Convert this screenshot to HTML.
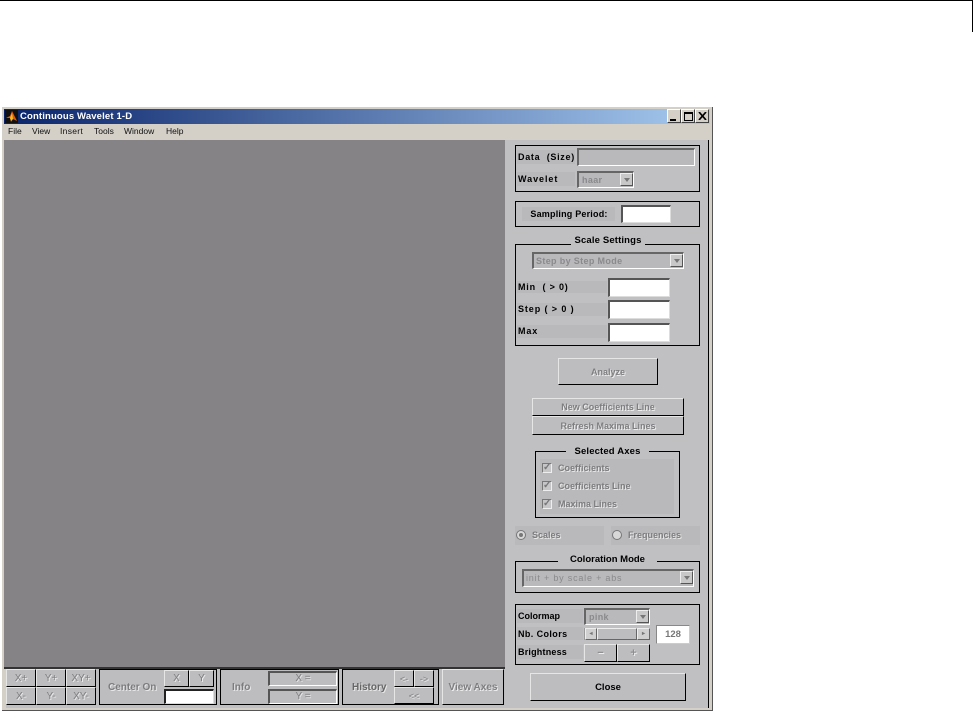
<!DOCTYPE html>
<html><head><meta charset="utf-8"><style>
html,body{margin:0;padding:0;background:#fff}
#r{position:relative;width:973px;height:711px;overflow:hidden;background:#fff;font:bold 9px "Liberation Sans",sans-serif;color:#000}
#r div{position:absolute;box-sizing:border-box;white-space:nowrap}
.b{border:1px solid #000}
.l{background:#b9b8bb;line-height:14px;padding-left:1px}
.t{background:#c0bfc2;text-align:center;line-height:14px;font-size:9.5px}
.d{color:#7c7c7f;text-shadow:1px 1px 0 #e8e8e8;text-align:center}
.btn{background:#bdbcbf;border:1px solid;border-color:#e6e6e6 #000 #000 #e6e6e6;display:flex;align-items:center;justify-content:center;color:#7e7e81;text-shadow:1px 1px 0 #eee}
.in{background:#fff;border:1px solid;border-color:#555 #ddd #ddd #555;border-width:2px 1px 1px 2px}
.sel{background:#b9b8bb;border:1px solid;border-color:#666 #fff #fff #666;border-width:2px 1px 1px 2px;color:#8a8a8d;font-weight:bold;line-height:14px;padding-left:3px;letter-spacing:.35px}
.ar{background:#c8c8c8;border:1px solid;border-color:#eee #555 #555 #eee;right:0;top:0;width:13px;height:13px}
.ar:after{content:"";position:absolute;left:3px;top:4px;border:3px solid transparent;border-top:4px solid #777;border-bottom:0}
.c{background:#c6c6c8;border:1px solid;border-color:#777 #eee #eee #777;width:10px;height:10px;color:#777;font-size:10px;line-height:8px;text-align:center}
.wb{background:#d4d0c8;border:1px solid;border-color:#fff #404040 #404040 #fff;width:14px;height:14px;top:109px}
</style></head><body><div id="r">
<div style="left:0;top:0;width:973px;height:1px;background:#000"></div>
<div style="left:972px;top:0;width:1px;height:32px;background:#000"></div>

<div style="left:2px;top:107px;width:711px;height:604px;background:#d4d0c8;border-right:1px solid #555;border-bottom:1px solid #555"></div>
<div style="left:4px;top:109px;width:706px;height:15px;background:linear-gradient(90deg,#0a246a,#a6caf0)"></div>
<div style="left:5px;top:110px;width:13px;height:13px;background:#111"></div>
<svg style="position:absolute;left:5px;top:110px" width="13" height="13"><path d="M1 8 5 6 7 1 9 5 12 11 8 9 6 12 5 8Z" fill="#e05a10"/><path d="M7 3 8 9 6 11 5 8Z" fill="#f6c020"/></svg>
<div style="left:20px;top:109px;height:15px;line-height:15px;color:#fff;font-size:9.5px;letter-spacing:.15px">Continuous Wavelet 1-D</div>
<div class="wb" style="left:667px"><div style="left:2px;top:9px;width:6px;height:2px;background:#000"></div></div>
<div class="wb" style="left:681px"><div style="left:2px;top:2px;width:9px;height:9px;border:1px solid #000;border-top-width:2px"></div></div>
<div class="wb" style="left:695px"><svg style="position:absolute;left:2px;top:2px" width="9" height="8"><path d="M1 0 8 8M8 0 1 8" stroke="#000" stroke-width="1.7"/></svg></div>
<div style="left:8px;top:124px;height:15px;line-height:15px;font-weight:normal;font-size:8.5px;color:#111">File</div>
<div style="left:32px;top:124px;height:15px;line-height:15px;font-weight:normal;font-size:8.5px;color:#111">View</div>
<div style="left:60px;top:124px;height:15px;line-height:15px;font-weight:normal;font-size:8.5px;color:#111;letter-spacing:.3px">Insert</div>
<div style="left:94px;top:124px;height:15px;line-height:15px;font-weight:normal;font-size:8.5px;color:#111">Tools</div>
<div style="left:124px;top:124px;height:15px;line-height:15px;font-weight:normal;font-size:8.5px;color:#111">Window</div>
<div style="left:166px;top:124px;height:15px;line-height:15px;font-weight:normal;font-size:8.5px;color:#111">Help</div>

<div style="left:6px;top:140px;width:703px;height:568px;background:#c0bfc2;border-right:1px solid #000"></div>
<div style="left:4px;top:140px;width:501px;height:527px;background:#868386"></div>
<div style="left:4px;top:667px;width:501px;height:2px;background:#333"></div>

<!-- Data -->
<div class="b" style="left:515px;top:145px;width:185px;height:47px"></div>
<div class="l" style="left:517px;top:150px;width:58px;height:14px;letter-spacing:.7px;line-height:15px">Data &nbsp;(Size)</div>
<div style="left:577px;top:148px;width:118px;height:18px;background:#b9b8bb;border:1px solid;border-color:#666 #fff #fff #666;border-width:2px 1px 1px 2px"></div>
<div class="l" style="left:517px;top:172px;width:58px;height:14px;letter-spacing:.95px;line-height:15px">Wavelet</div>
<div class="sel" style="left:577px;top:171px;width:57px;height:17px">haar<div class="ar"></div></div>

<div class="b" style="left:515px;top:201px;width:185px;height:26px"></div>
<div class="l" style="left:522px;top:207px;width:93px;height:14px;text-align:center;letter-spacing:.2px">Sampling Period:</div>
<div class="in" style="left:621px;top:205px;width:50px;height:18px"></div>

<!-- Scale -->
<div class="b" style="left:515px;top:244px;width:185px;height:102px"></div>
<div class="t" style="left:571px;top:234px;width:74px;height:14px;letter-spacing:.15px">Scale Settings</div>
<div class="sel" style="left:532px;top:252px;width:152px;height:17px;padding-left:2px">Step by Step Mode<div class="ar"></div></div>
<div class="l" style="left:517px;top:281px;width:90px;height:12px;line-height:12px;letter-spacing:.8px">Min &nbsp;( &gt; 0)</div>
<div class="l" style="left:517px;top:303px;width:90px;height:13px;line-height:13px;letter-spacing:.9px">Step ( &gt; 0 )</div>
<div class="l" style="left:517px;top:325px;width:90px;height:13px;line-height:13px;letter-spacing:.9px">Max</div>
<div class="in" style="left:608px;top:278px;width:62px;height:19px"></div>
<div class="in" style="left:608px;top:300px;width:62px;height:19px"></div>
<div class="in" style="left:608px;top:323px;width:62px;height:19px"></div>

<div class="btn" style="left:558px;top:358px;width:100px;height:27px">Analyze</div>
<div class="btn" style="left:532px;top:398px;width:152px;height:18px">New Coefficients Line</div>
<div class="btn" style="left:532px;top:416px;width:152px;height:19px">Refresh Maxima Lines</div>

<!-- Selected Axes -->
<div class="b" style="left:535px;top:451px;width:145px;height:67px"></div>
<div class="t" style="left:566px;top:445px;width:83px;height:14px;letter-spacing:.15px">Selected Axes</div>
<div style="left:540px;top:459px;width:134px;height:55px;background:#b9b8bb"></div>
<div class="c" style="left:542px;top:463px">&#10003;</div>
<div class="c" style="left:542px;top:481px">&#10003;</div>
<div class="c" style="left:542px;top:499px">&#10003;</div>
<div class="d" style="left:558px;top:462px;line-height:13px">Coefficients</div>
<div class="d" style="left:558px;top:480px;line-height:13px">Coefficients Line</div>
<div class="d" style="left:558px;top:498px;line-height:13px">Maxima Lines</div>

<div style="left:515px;top:526px;width:89px;height:19px;background:#b9b8bb"></div>
<div style="left:611px;top:526px;width:89px;height:19px;background:#b9b8bb"></div>
<div style="left:516px;top:530px;width:10px;height:10px;border-radius:50%;background:#d8d8d8;border:1px solid #777"></div>
<div style="left:519px;top:533px;width:4px;height:4px;border-radius:50%;background:#777"></div>
<div style="left:612px;top:530px;width:10px;height:10px;border-radius:50%;background:#d8d8d8;border:1px solid #777"></div>
<div class="d" style="left:532px;top:529px;line-height:13px">Scales</div>
<div class="d" style="left:628px;top:529px;line-height:13px">Frequencies</div>

<!-- Coloration -->
<div class="b" style="left:515px;top:561px;width:185px;height:32px"></div>
<div class="t" style="left:558px;top:553px;width:99px;height:15px">Coloration Mode</div>
<div class="sel" style="left:522px;top:569px;width:172px;height:18px;padding-left:2px;letter-spacing:.8px;font-weight:normal">init + by scale + abs<div class="ar"></div></div>

<!-- Colormap -->
<div class="b" style="left:515px;top:604px;width:185px;height:61px"></div>
<div class="l" style="left:517px;top:609px;width:66px;height:14px;line-height:15px">Colormap</div>
<div class="l" style="left:517px;top:627px;width:66px;height:13px;line-height:14px;letter-spacing:.4px">Nb. Colors</div>
<div class="l" style="left:517px;top:645px;width:66px;height:14px;line-height:15px;letter-spacing:.2px">Brightness</div>
<div class="sel" style="left:584px;top:608px;width:66px;height:17px">pink<div class="ar"></div></div>
<div style="left:584px;top:628px;width:66px;height:12px;background:#c4c4c6;border:1px solid #999"></div>
<div style="left:585px;top:628px;width:12px;height:12px;background:#d0d0d0;border:1px solid;border-color:#eee #666 #666 #eee;font-size:6px;line-height:10px;text-align:center;color:#777">&#9666;</div>
<div style="left:597px;top:628px;width:40px;height:12px;background:#bdbcbf;border:1px solid;border-color:#eee #666 #666 #eee"></div>
<div style="left:637px;top:628px;width:13px;height:12px;background:#d0d0d0;border:1px solid;border-color:#eee #666 #666 #eee;font-size:6px;line-height:10px;text-align:center;color:#777">&#9656;</div>
<div style="left:656px;top:625px;width:34px;height:19px;background:#fff;border:1px solid;border-color:#888 #ccc #ccc #888;font-size:9.5px;color:#777;text-align:center;line-height:17px">128</div>
<div class="btn" style="left:584px;top:644px;width:33px;height:18px;font-size:11px;color:#8e8e91">&#8722;</div>
<div class="btn" style="left:617px;top:644px;width:33px;height:18px;font-size:11px;color:#8e8e91">+</div>
<div class="btn" style="left:530px;top:673px;width:156px;height:28px;color:#000;text-shadow:none;font-size:9.5px">Close</div>

<!-- Bottom bar -->
<div style="left:6px;top:669px;width:499px;height:36px;background:#bdbcbf"></div>
<div class="btn" style="left:6px;top:669px;width:30px;height:18px;font-weight:normal;font-size:10px">X+</div>
<div class="btn" style="left:36px;top:669px;width:30px;height:18px;font-weight:normal;font-size:10px">Y+</div>
<div class="btn" style="left:66px;top:669px;width:30px;height:18px;font-weight:normal;font-size:10px">XY+</div>
<div class="btn" style="left:6px;top:687px;width:30px;height:18px;font-weight:normal;font-size:10px">X-</div>
<div class="btn" style="left:36px;top:687px;width:30px;height:18px;font-weight:normal;font-size:10px">Y-</div>
<div class="btn" style="left:66px;top:687px;width:30px;height:18px;font-weight:normal;font-size:10px">XY-</div>

<div class="b" style="left:99px;top:669px;width:118px;height:36px"></div>
<div class="d" style="left:108px;top:681px;font-size:10px;line-height:13px">Center On</div>
<div class="btn" style="left:164px;top:670px;width:25px;height:17px;font-weight:normal;font-size:10px">X</div>
<div class="btn" style="left:189px;top:670px;width:25px;height:17px;font-weight:normal;font-size:10px">Y</div>
<div class="in" style="left:164px;top:689px;width:50px;height:15px;border-color:#222 #ddd #ddd #222"></div>

<div class="b" style="left:220px;top:669px;width:119px;height:36px"></div>
<div class="d" style="left:232px;top:681px;font-size:10px;line-height:13px">Info</div>
<div class="d" style="left:268px;top:671px;width:69px;height:15px;border:2px solid;border-color:#555 #fff #fff #555;border-width:2px 1px 1px 2px;font-weight:normal;font-size:10px;line-height:12px">X =</div>
<div class="d" style="left:268px;top:689px;width:69px;height:15px;border:2px solid;border-color:#555 #fff #fff #555;border-width:2px 1px 1px 2px;font-weight:normal;font-size:10px;line-height:12px">Y =</div>

<div class="b" style="left:342px;top:669px;width:97px;height:36px"></div>
<div class="d" style="left:352px;top:681px;font-size:10px;line-height:13px;color:#666">History</div>
<div class="btn" style="left:394px;top:670px;width:20px;height:17px;font-weight:normal">&lt;-</div>
<div class="btn" style="left:414px;top:670px;width:20px;height:17px;font-weight:normal">-&gt;</div>
<div class="btn" style="left:394px;top:687px;width:40px;height:17px;font-weight:normal">&lt;&lt;</div>
<div class="btn" style="left:442px;top:669px;width:62px;height:36px;font-size:10px">View Axes</div>
</div></body></html>
